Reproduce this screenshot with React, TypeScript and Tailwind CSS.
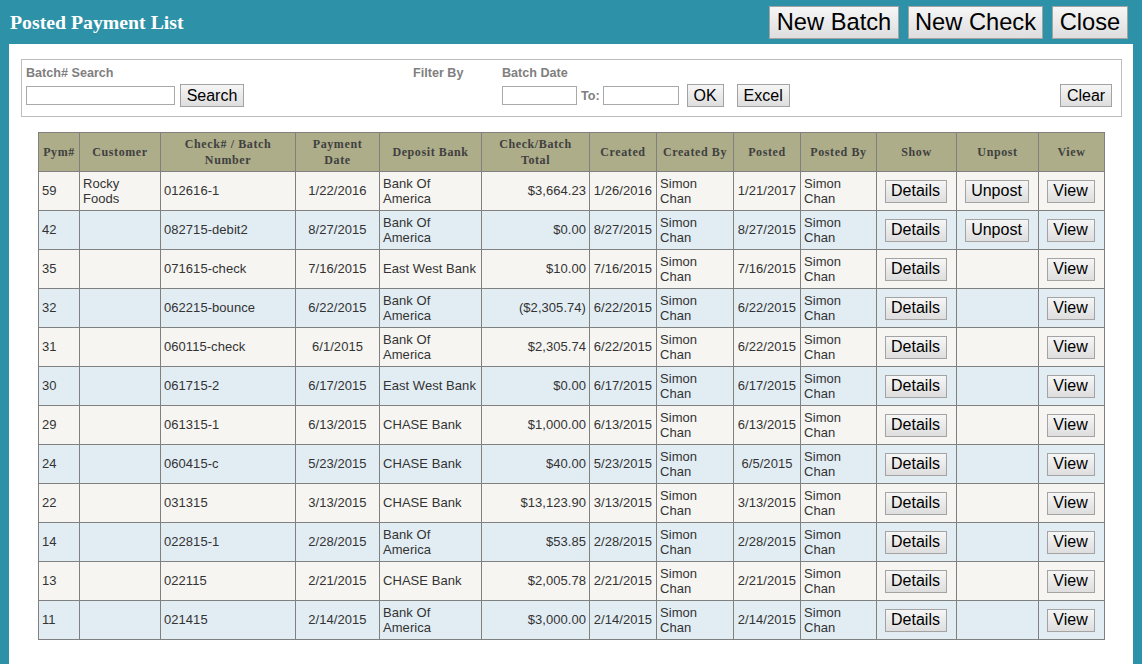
const rows = [
  ["59", "Rocky Foods", "012616-1", "1/22/2016", "Bank Of America", "$3,664.23", "1/26/2016", "1/21/2017", true],
  ["42", "", "082715-debit2", "8/27/2015", "Bank Of America", "$0.00", "8/27/2015", "8/27/2015", true],
  ["35", "", "071615-check", "7/16/2015", "East West Bank", "$10.00", "7/16/2015", "7/16/2015", false],
  ["32", "", "062215-bounce", "6/22/2015", "Bank Of America", "($2,305.74)", "6/22/2015", "6/22/2015", false],
  ["31", "", "060115-check", "6/1/2015", "Bank Of America", "$2,305.74", "6/22/2015", "6/22/2015", false],
  ["30", "", "061715-2", "6/17/2015", "East West Bank", "$0.00", "6/17/2015", "6/17/2015", false],
  ["29", "", "061315-1", "6/13/2015", "CHASE Bank", "$1,000.00", "6/13/2015", "6/13/2015", false],
  ["24", "", "060415-c", "5/23/2015", "CHASE Bank", "$40.00", "5/23/2015", "6/5/2015", false],
  ["22", "", "031315", "3/13/2015", "CHASE Bank", "$13,123.90", "3/13/2015", "3/13/2015", false],
  ["14", "", "022815-1", "2/28/2015", "Bank Of America", "$53.85", "2/28/2015", "2/28/2015", false],
  ["13", "", "022115", "2/21/2015", "CHASE Bank", "$2,005.78", "2/21/2015", "2/21/2015", false],
  ["11", "", "021415", "2/14/2015", "Bank Of America", "$3,000.00", "2/14/2015", "2/14/2015", false],
] as const;

const headers = ["Pym#", "Customer", "Check# / Batch|Number", "Payment|Date", "Deposit Bank", "Check/Batch|Total", "Created", "Created By", "Posted", "Posted By", "Show", "Unpost", "View"];
const btn = "border border-[#a3a3a3] bg-gradient-to-b from-[#f6f6f6] to-[#dedede] text-black font-['Liberation_Sans',sans-serif]";
const small = `${btn} h-[23px] text-[16px] leading-none px-0 align-middle`;
const big = `${btn} h-[33px] text-[23.7px] leading-none`;
const input = "h-[19px] border border-[#a9a9a9] bg-white";
const label = "text-[12.6px] font-bold text-[#7f7f7f] leading-[14px]";
const td = "border border-[#808080] p-0 px-[3px] text-[13px] tracking-[0.05px] leading-[15px] text-[#333333]";
const one = `${td} pb-[1px]`;
const action = "border border-[#808080] p-0 pr-[2px] text-center text-[13px] leading-[15px]";

export default function App() {
  return (
    <div className="w-[1142px] h-[664px] overflow-hidden bg-[#2d92a7] font-['Liberation_Sans',sans-serif]">
      <header className="h-[44px] flex items-start justify-between pl-[10px] pr-[14px]">
        <h1 className="mt-[11px] font-['Liberation_Serif',serif] font-bold text-[19.8px] leading-[22px] text-white">Posted Payment List</h1>
        <div className="flex gap-[9px] mt-[6px]">
          <button className={`${big} w-[130px]`}>New Batch</button>
          <button className={`${big} w-[135px]`}>New Check</button>
          <button className={`${big} w-[76px]`}>Close</button>
        </div>
      </header>
      <main className="ml-[9px] w-[1124px] h-[620px] bg-white pt-[15px] pl-[12px]">
        <section className="w-[1101px] h-[58px] border border-[#bdbdbd] flex pl-[4px] pt-[6px]">
          <div className="w-[387px]">
            <div className={label}>Batch# Search</div>
            <div className="flex items-center gap-[5px] mt-[4px]">
              <input className={`${input} w-[149px]`} />
              <button className={`${small} w-[64px]`}>Search</button>
            </div>
          </div>
          <div className={`w-[89px] ${label}`}>Filter By</div>
          <div className="flex-1">
            <div className={label}>Batch Date</div>
            <div className="flex items-center mt-[4px]">
              <input className={`${input} w-[75px]`} />
              <span className={`${label} ml-[4px] mr-[3px]`}>To:</span>
              <input className={`${input} w-[76px]`} />
              <button className={`${small} w-[37px] ml-[8px]`}>OK</button>
              <button className={`${small} w-[53px] ml-[13px]`}>Excel</button>
              <button className={`${small} w-[52px] ml-auto mr-[9px]`}>Clear</button>
            </div>
          </div>
        </section>
        <table className="mt-[15px] ml-[17px] w-[1066px] table-fixed border-collapse">
          <colgroup>
            {[41, 81, 135, 84, 102, 108, 67, 77, 67, 76, 80, 82, 66].map((w, i) => (
              <col key={i} style={{ width: w }} />
            ))}
          </colgroup>
          <thead>
            <tr className="h-[39px] bg-[#adad89]">
              {headers.map((h) => (
                <th key={h} className="border border-[#808080] p-0 font-['Liberation_Serif',serif] font-bold text-[12px] leading-[16px] tracking-[0.6px] text-[#404040] text-center align-middle">
                  {h.split("|").map((l, i) => (
                    <span key={i} className="block">{l}</span>
                  ))}
                </th>
              ))}
            </tr>
          </thead>
          <tbody>
            {rows.map((r, i) => (
              <tr key={r[0]} className={`h-[39px] ${i % 2 === 0 ? "bg-[#f6f5f1]" : "bg-[#e2edf3]"}`}>
                <td className={one}>{r[0]}</td>
                <td className={td}>{r[1]}</td>
                <td className={one}>{r[2]}</td>
                <td className={`${one} text-center`}>{r[3]}</td>
                <td className={r[4] === "Bank Of America" ? td : one}>{r[4]}</td>
                <td className={`${one} text-right`}>{r[5]}</td>
                <td className={`${one} text-center`}>{r[6]}</td>
                <td className={td}>Simon Chan</td>
                <td className={`${one} text-center`}>{r[7]}</td>
                <td className={td}>Simon Chan</td>
                <td className={action}><button className={`${small} w-[62px]`}>Details</button></td>
                <td className={action}>{r[8] && <button className={`${small} w-[64px]`}>Unpost</button>}</td>
                <td className={action}><button className={`${small} w-[48px]`}>View</button></td>
              </tr>
            ))}
          </tbody>
        </table>
      </main>
    </div>
  );
}
